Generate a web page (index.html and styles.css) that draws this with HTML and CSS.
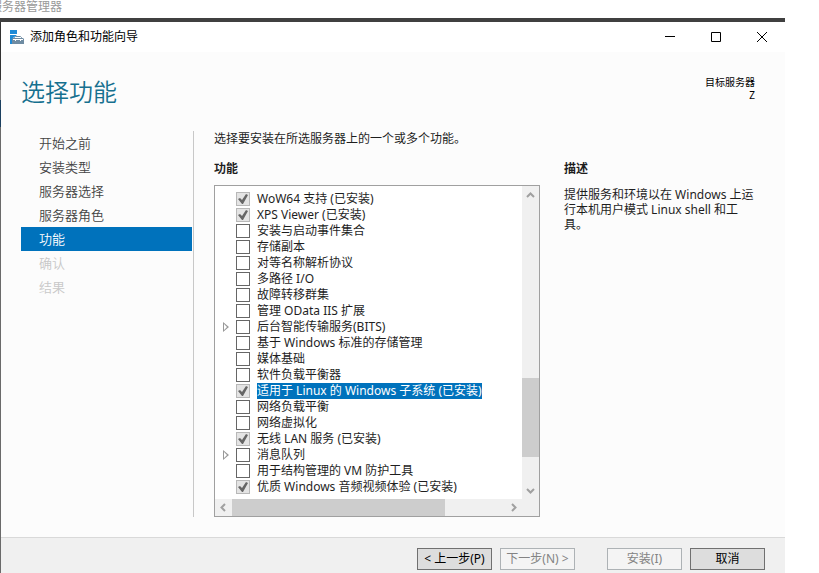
FILE: index.html
```html
<!DOCTYPE html>
<html lang="zh-CN">
<head>
    <meta charset="UTF-8">
    <meta name="viewport" content="width=device-width, initial-scale=1.0">
    <title>添加角色和功能向导</title>
    <link rel="stylesheet" href="styles.css">
</head>
<body>

<div class="parent-title">服务器管理器</div>

<div class="window">
    <div class="titlebar">
        <svg class="app-icon" width="15" height="15" viewBox="0 0 15 15">
            <path fill="#1e8ad6" d="M0 0h7v4H0zM0 5h7L3 8v6H0z"/>
            <path fill="none" stroke="#6f8ca3" d="M4.500 8V7.500l1-1h5l1 1V8"/>
            <path fill="#6f8ca3" d="M2 9l1-1h10l1 1v5H2z"/>
            <path fill="#fff" d="M3 9h10v1h-2v1h-1v-1H6v1H5v-1H3z"/>
        </svg>
        <span class="titlebar-text">添加角色和功能向导</span>
        <button class="win-btn" aria-label="最小化">
            <svg width="11" height="11" viewBox="0 0 11 11"><path d="M0 4.500h10"/></svg>
        </button>
        <button class="win-btn" aria-label="最大化">
            <svg width="11" height="11" viewBox="0 0 11 11"><path d="M.5.5h9v9h-9z"/></svg>
        </button>
        <button class="win-btn" aria-label="关闭">
            <svg width="11" height="11" viewBox="0 0 11 11"><path d="M0 0l10 10M10 0L0 10"/></svg>
        </button>
    </div>

    <header class="header">
        <h1>选择功能</h1>
        <div class="target">
            <div>目标服务器</div>
            <div>Z</div>
        </div>
    </header>

    <div class="content">
        <nav class="steps">
            <a href="#">开始之前</a>
            <a href="#">安装类型</a>
            <a href="#">服务器选择</a>
            <a href="#">服务器角色</a>
            <a href="#" class="active">功能</a>
            <a class="disabled">确认</a>
            <a class="disabled">结果</a>
        </nav>

        <main class="main">
            <p class="intro">选择要安装在所选服务器上的一个或多个功能。</p>
            <div class="columns">
                <section class="features">
                    <h2>功能</h2>
                    <div class="listbox">
                        <ul class="list">
                            <li><label><input type="checkbox" checked disabled><span>WoW64 支持 (已安装)</span></label></li>
                            <li><label><input type="checkbox" checked disabled><span>XPS Viewer (已安装)</span></label></li>
                            <li><label><input type="checkbox"><span>安装与启动事件集合</span></label></li>
                            <li><label><input type="checkbox"><span>存储副本</span></label></li>
                            <li><label><input type="checkbox"><span>对等名称解析协议</span></label></li>
                            <li><label><input type="checkbox"><span>多路径 I/O</span></label></li>
                            <li><label><input type="checkbox"><span>故障转移群集</span></label></li>
                            <li><label><input type="checkbox"><span>管理 OData IIS 扩展</span></label></li>
                            <li class="parent"><label><input type="checkbox"><span>后台智能传输服务(BITS)</span></label></li>
                            <li><label><input type="checkbox"><span>基于 Windows 标准的存储管理</span></label></li>
                            <li><label><input type="checkbox"><span>媒体基础</span></label></li>
                            <li><label><input type="checkbox"><span>软件负载平衡器</span></label></li>
                            <li class="selected"><label><input type="checkbox" checked disabled><span>适用于 Linux 的 Windows 子系统 (已安装)</span></label></li>
                            <li><label><input type="checkbox"><span>网络负载平衡</span></label></li>
                            <li><label><input type="checkbox"><span>网络虚拟化</span></label></li>
                            <li><label><input type="checkbox" checked disabled><span>无线 LAN 服务 (已安装)</span></label></li>
                            <li class="parent"><label><input type="checkbox"><span>消息队列</span></label></li>
                            <li><label><input type="checkbox"><span>用于结构管理的 VM 防护工具</span></label></li>
                            <li><label><input type="checkbox" checked disabled><span>优质 Windows 音频视频体验 (已安装)</span></label></li>
                        </ul>
                        <div class="scroll scroll-v">
                            <button aria-label="向上滚动"><svg width="9" height="9" viewBox="0 0 9 9"><path d="M1 7l3.500-3.500L8 7"/></svg></button>
                            <div class="before"></div>
                            <div class="thumb"></div>
                            <div class="after"></div>
                            <button aria-label="向下滚动"><svg width="9" height="9" viewBox="0 0 9 9"><path d="M1 3l3.500 3.500L8 3"/></svg></button>
                        </div>
                        <div class="scroll scroll-h">
                            <button aria-label="向左滚动"><svg width="9" height="9" viewBox="0 0 9 9"><path d="M6 1L2.500 4.500 6 8"/></svg></button>
                            <div class="thumb"></div>
                            <div class="after"></div>
                            <button aria-label="向右滚动"><svg width="9" height="9" viewBox="0 0 9 9"><path d="M3 1l3.500 3.500L3 8"/></svg></button>
                        </div>
                    </div>
                </section>

                <section class="description">
                    <h2>描述</h2>
                    <p>提供服务和环境以在 Windows 上运行本机用户模式 Linux shell 和工具。</p>
                </section>
            </div>
        </main>
    </div>

    <footer class="footer">
        <button class="btn">&lt; 上一步(P)</button>
        <button class="btn" disabled>下一步(N) &gt;</button>
        <button class="btn install" disabled>安装(I)</button>
        <button class="btn">取消</button>
    </footer>
</div>

</body>
</html>
```

FILE: styles.css
```css
* {
    box-sizing: border-box;
}
body {
    margin: 0;
    min-height: 100vh;
    display: flex;
    flex-direction: column;
    overflow: hidden;
    background: #fff;
    color: #1e1e1e;
    font-family: "Noto Sans", "Noto Sans CJK SC", sans-serif;
    font-size: 12px;
    line-height: 16px;
}
h1, h2, p, ul {
    margin: 0;
    padding: 0;
}
button {
    font: inherit;
    padding: 0;
}
.parent-title {
    height: 18px;
    line-height: 14px;
    text-indent: -10px;
    color: #999;
}

/* Janela do assistente */
.window {
    flex: 1;
    display: flex;
    flex-direction: column;
    margin-right: 34px;
    padding-left: 1px;
    border-top: 4px solid #404040;
    background: linear-gradient(#333 58px, #888 58px, #888 78px, #1b3f5f 78px, #1b3f5f 105px, #6a6a6a 105px);
}
.titlebar {
    display: flex;
    align-items: center;
    height: 30px;
    padding-left: 9px;
    background: #fff;
    color: #000;
}
.titlebar-text {
    flex: 1;
    padding-left: 5px;
}
.win-btn {
    display: flex;
    align-items: center;
    justify-content: center;
    width: 46px;
    height: 30px;
    border: none;
    background: none;
}
.win-btn svg {
    fill: none;
    stroke: #000;
}
.header {
    display: flex;
    justify-content: space-between;
    height: 79px;
    padding: 23px 30px 0 20px;
    background: #fcfcfc;
}
h1 {
    font-family: "Noto Sans CJK SC", sans-serif;
    font-size: 24px;
    line-height: 32px;
    font-weight: 350;
    color: #16708f;
}
.target {
    font-size: 10px;
    line-height: 13px;
    padding-top: 1px;
    text-align: right;
    color: #000;
}

.content {
    flex: 1;
    display: flex;
    padding: 0 24px 20px 20px;
    background: #fcfcfc;
}
.steps {
    width: 173px;
    padding-right: 1px;
    border-right: 1px solid #c8c8c8;
}
.steps a {
    display: block;
    height: 24px;
    padding-left: 18px;
    font-size: 13px;
    font-weight: 350;
    line-height: 24px;
    color: #444;
    text-decoration: none;
}
.steps a.active {
    background: #0072bc;
    color: #fff;
}
.steps a.disabled {
    color: #c8c8c8;
}
.main {
    flex: 1;
    display: flex;
    flex-direction: column;
    padding-left: 20px;
}
.intro {
    height: 30px;
}
h2 {
    font-size: 12px;
    line-height: 16px;
    font-weight: bold;
}
.columns {
    flex: 1;
    display: flex;
    gap: 24px;
}
.features {
    flex: 1;
    display: flex;
    flex-direction: column;
}
.description {
    width: 197px;
}
.description p {
    margin-top: 10px;
    line-height: 15px;
}

/* Lista de recursos */
.listbox {
    flex: 1;
    display: grid;
    grid-template-columns: 1fr 17px;
    grid-template-rows: 1fr 17px;
    margin-top: 8px;
    border: 1px solid #a0a0a0;
    background: #f0f0f0;
}
.list {
    list-style: none;
    padding: 5px 0 3px 8px;
    background: #fff;
}
.list li {
    display: flex;
    align-items: center;
    height: 16px;
    padding-left: 13px;
}
.list li.parent {
    padding-left: 0;
}
.list li.parent::before {
    content: "";
    width: 6px;
    height: 10px;
    margin-right: 7px;
    background: #999;
    clip-path: polygon(evenodd, 0 0, 6px 5px, 0 10px, 0 0, 1px 2px, 4px 5px, 1px 8px, 1px 2px);
}
.list label {
    display: flex;
    align-items: center;
    white-space: nowrap;
}
.list input {
    appearance: none;
    width: 14px;
    height: 14px;
    margin: 0 7px 0 0;
    border: 1px solid #666;
    background: #fff;
}
.list input:checked {
    border-color: #b8b8b8;
    background: #e4e4e4;
}
.list input:checked::before {
    content: "";
    display: block;
    width: 12px;
    height: 12px;
    background: #666;
    clip-path: polygon(1px 6px, 3px 5px, 5px 7px, 9px 1px, 11px 2px, 6px 11px, 5px 11px);
}
.list span {
    height: 16px;
}
.list .selected span {
    background: #0072bc;
    color: #fff;
}

.scroll {
    display: flex;
}
.scroll-v {
    flex-direction: column;
}
.scroll button {
    display: flex;
    align-items: center;
    justify-content: center;
    width: 17px;
    height: 17px;
    border: none;
    background: none;
}
.scroll svg {
    fill: none;
    stroke: #a0a0a0;
    stroke-width: 2;
}
.thumb {
    background: #cdcdcd;
}
.scroll-v .before {
    flex: 175;
}
.scroll-v .thumb {
    flex: 79;
}
.scroll-v .after {
    flex: 25;
}
.scroll-h .thumb {
    flex: 213;
}
.scroll-h .after {
    flex: 60;
}

.footer {
    display: flex;
    justify-content: flex-end;
    gap: 8px;
    height: 36px;
    padding: 10px 20px 0;
    border-top: 1px solid #d9d9d9;
    background: #f0f0f0;
}
.btn {
    width: 75px;
    height: 22px;
    border: 1px solid #707070;
    background: #ddd;
    color: #000;
    white-space: nowrap;
}
.btn:disabled {
    border-color: #adb2b5;
    background: #f4f4f4;
    color: #838383;
}
.btn.install {
    margin-left: 24px;
}
```
